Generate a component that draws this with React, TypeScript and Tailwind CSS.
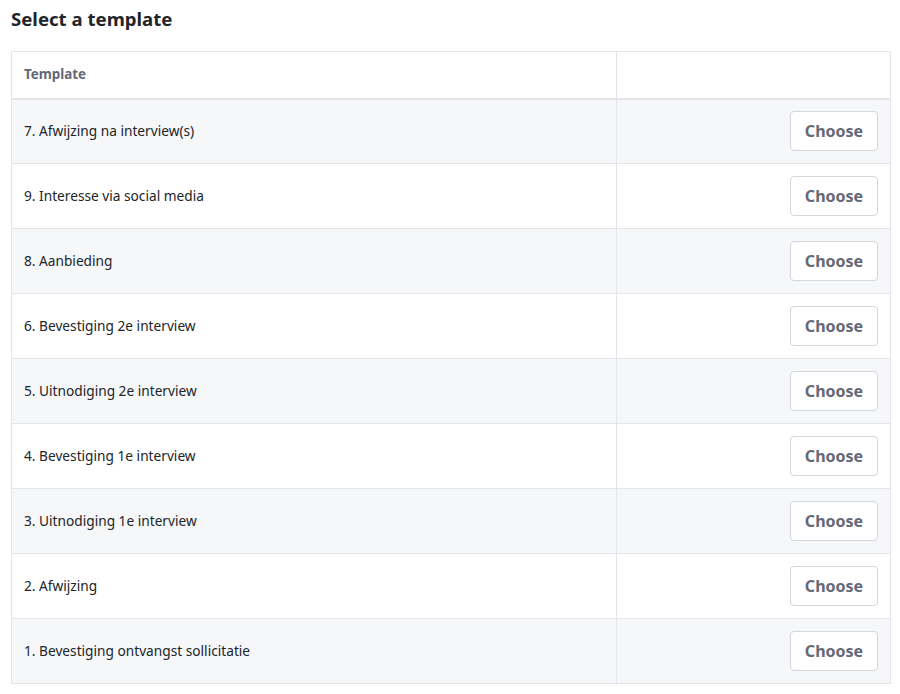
const rows = [
  "7. Afwijzing na interview(s)",
  "9. Interesse via social media",
  "8. Aanbieding",
  "6. Bevestiging 2e interview",
  "5. Uitnodiging 2e interview",
  "4. Bevestiging 1e interview",
  "3. Uitnodiging 1e interview",
  "2. Afwijzing",
  "1. Bevestiging ontvangst sollicitatie",
];

export default function App() {
  return (
    <div
      className="w-[900px] h-[694px] bg-white px-[11px] pt-[6px]"
      style={{ fontFamily: '"Noto Sans", "Open Sans", sans-serif' }}
    >
      <h1 className="text-[18.6px] leading-[26px] font-bold text-[#212529]">
        Select a template
      </h1>
      <table className="mt-[19px] w-[880px] border-collapse border border-[#e4e5ea] text-[#212529]">
        <thead>
          <tr className="h-[47px] border-b-2 border-[#e4e5ea]">
            <th className="text-left pl-[12px] pb-[1px] text-[13.4px] font-bold text-[#646877] w-[605px] border-r border-[#e4e5ea]">
              Template
            </th>
            <th></th>
          </tr>
        </thead>
        <tbody>
          {rows.map((r, i) => (
            <tr
              key={r}
              className={`h-[65px] border-t border-[#e4e5ea] ${i % 2 === 0 ? "bg-[#f6f7f9]" : "bg-white"}`}
            >
              <td className="pl-[12px] text-[13.7px] border-r border-[#e4e5ea]">{r}</td>
              <td className="pr-[12px] text-right">
                <button className="w-[88px] h-[40px] rounded-[4px] border border-[#d4d6dd] bg-white text-[16px] font-bold text-[#646877]">
                  Choose
                </button>
              </td>
            </tr>
          ))}
        </tbody>
      </table>
    </div>
  );
}
